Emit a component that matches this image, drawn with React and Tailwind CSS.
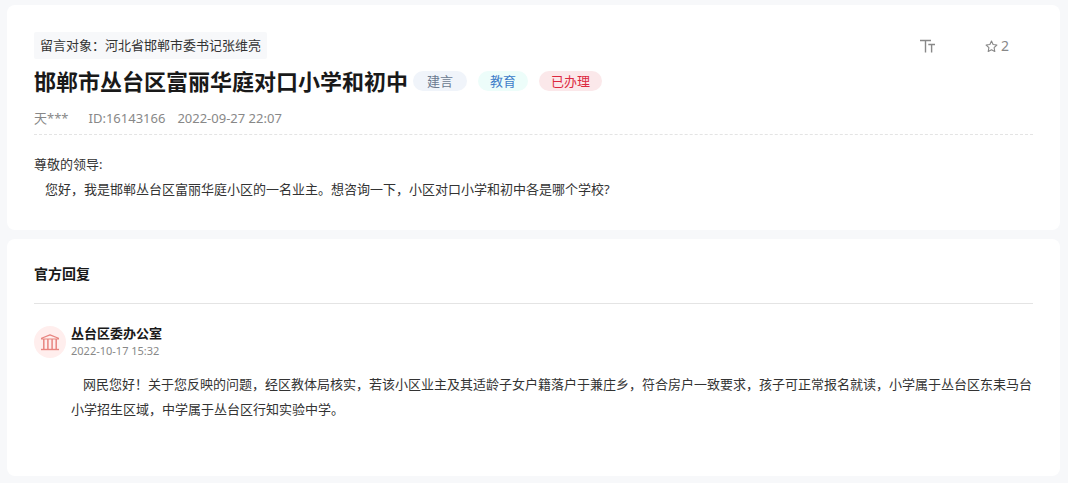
function FontSizeIcon() {
  return (
    <svg viewBox="0 0 16 14" className="h-[14px] w-4" fill="none" stroke="currentColor" strokeWidth="1.4" aria-hidden="true">
      <path d="M0 1.5H11M5.5 1.5V13.5" />
      <path d="M8.3 5.5H15M11.6 5.5V13.5" />
    </svg>
  );
}

function StarIcon() {
  return (
    <svg viewBox="0 0 13 13" className="h-[13px] w-[13px]" fill="none" stroke="currentColor" strokeWidth="1.1" strokeLinejoin="round" aria-hidden="true">
      <path d="M6.5 1.1L8.1 4.5L11.9 5L9.1 7.6L9.8 11.5L6.5 9.7L3.2 11.5L3.9 7.6L1.1 5L4.9 4.5Z" />
    </svg>
  );
}

function InstitutionIcon() {
  return (
    <svg viewBox="0 0 18 17" className="h-[17px] w-[18px]" fill="none" stroke="currentColor" strokeWidth="1.2" aria-hidden="true">
      <path d="M0.5 5V4.2L9 0.9L17.5 4.2V5Z" strokeLinejoin="round" />
      <path d="M2.8 5V15.6M6.9 5V15.6M11.1 5V15.6M15.2 5V15.6" strokeWidth="1.5" />
      <path d="M0 15.5H18" strokeWidth="1.4" />
    </svg>
  );
}

function Card({ className, children }) {
  return <section className={`rounded-lg bg-white px-[27px] ${className}`}>{children}</section>;
}

export default function App() {
  return (
    <main className="flex min-h-screen flex-col gap-[9px] bg-[#f7f8fa] pt-[5px] pr-2 pb-[7px] pl-[7px] font-['Noto_Sans','Noto_Sans_CJK_SC',sans-serif] text-[13px] text-[#333]">
      <Card className="pt-[27px] pb-7">
        <header className="border-b border-dashed border-[#e4e4e4]">
          <div className="flex items-start justify-between">
            <p className="rounded-xs bg-[#f7f8fa] px-[6px] leading-[27px]">留言对象：河北省邯郸市委书记张维亮</p>
            <div className="mt-1 mr-6 flex items-center gap-[49px] text-[#888] leading-5">
              <button type="button" aria-label="字号" className="flex h-5 items-center">
                <FontSizeIcon />
              </button>
              <button type="button" aria-label="收藏" className="flex h-5 items-center gap-[3px]">
                <StarIcon />
                <span className="text-[14px]">2</span>
              </button>
            </div>
          </div>
          <div className="flex items-center gap-[11px] pt-[6px]">
            <h1 className="-mr-[6px] text-[22px] leading-8 font-bold text-[#191919]">邯郸市丛台区富丽华庭对口小学和初中</h1>
            <span className="rounded-full bg-[#f0f4fa] px-[14px] leading-5 text-[#6b7a90]">建言</span>
            <span className="rounded-full bg-[#edfdfa] px-3 leading-5 text-[#3e7cc9]">教育</span>
            <span className="rounded-full bg-[#fbe8ea] px-3 leading-5 text-[#dc2840]">已办理</span>
          </div>
          <div className="flex pt-[11px] pb-[6px] leading-5 text-[#888]">
            <span className="mr-5">天***</span>
            <span className="mr-3">ID:16143166</span>
            <time>2022-09-27 22:07</time>
          </div>
        </header>
        <div className="pt-[17px] leading-[25px]">
          <p>尊敬的领导:</p>
          <p className="pl-[11px]">您好，我是邯郸丛台区富丽华庭小区的一名业主。想咨询一下，小区对口小学和初中各是哪个学校?</p>
        </div>
      </Card>

      <Card className="grow pt-5 pb-[54px]">
        <h2 className="border-b border-[#e4e4e4] pt-1 pb-[19px] text-[14px] leading-[21px] font-bold text-[#191919]">官方回复</h2>
        <article className="flex gap-[5px] pt-[22px]">
          <div className="flex h-8 w-8 shrink-0 items-center justify-center rounded-full bg-[#ffeeed] text-[#e88580]">
            <InstitutionIcon />
          </div>
          <div className="min-w-0 flex-1">
            <h3 className="leading-[14px] font-bold text-[#191919]">丛台区委办公室</h3>
            <time className="block pt-[2px] text-[11px] leading-[18px] text-[#888]">2022-10-17 15:32</time>
            <p className="indent-3 pt-3 leading-[25px]">
              网民您好！关于您反映的问题，经区教体局核实，若该小区业主及其适龄子女户籍落户于兼庄乡，符合房户一致要求，孩子可正常报名就读，小学属于丛台区东耒马台小学招生区域，中学属于丛台区行知实验中学。
            </p>
          </div>
        </article>
      </Card>
    </main>
  );
}
